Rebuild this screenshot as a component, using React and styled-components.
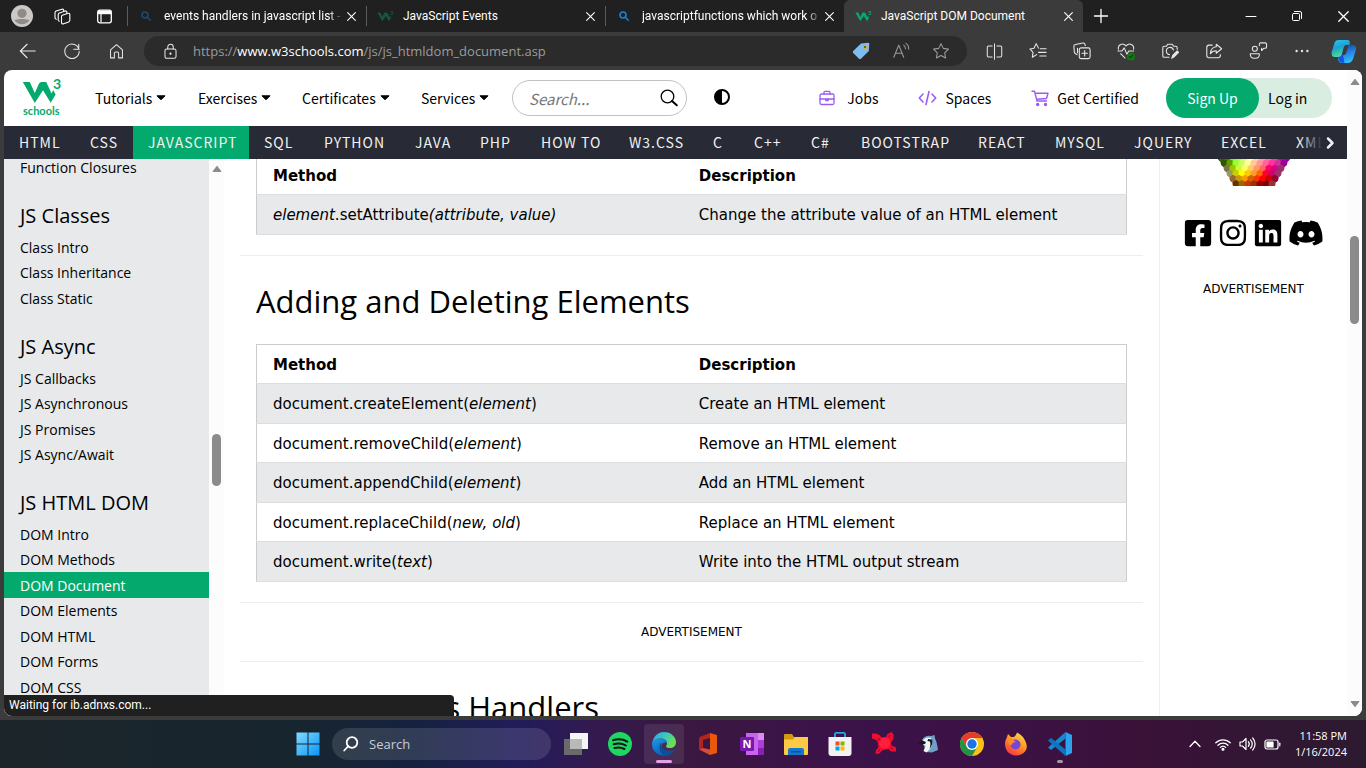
import React from "react";
import styled, { createGlobalStyle, css } from "styled-components";
import { FaFacebookSquare, FaInstagram, FaLinkedin, FaDiscord } from "react-icons/fa";

const green = "#04aa6d";
const segoe = '"Segoe UI", "Open Sans", "Noto Sans", sans-serif';
const chromeFont = '"Segoe UI", Roboto, "Open Sans", sans-serif';
const source = '"Source Sans Pro", "Noto Sans CJK SC", sans-serif';
const verdana = 'Verdana, "DejaVu Sans", sans-serif';

const GlobalStyle = createGlobalStyle`
  *, *::before, *::after { box-sizing: border-box; }
  body { margin: 0; background: #3b3b3b; font-family: ${segoe}; overflow: hidden; }
  button, input { font: inherit; color: inherit; border: 0; background: none; padding: 0; margin: 0; }
  button { cursor: pointer; }
  a { color: inherit; text-decoration: none; }
  svg { display: block; flex: none; overflow: visible; }
  ul { list-style: none; margin: 0; padding: 0; }
`;

const Desktop = styled.div`
  display: flex;
  flex-direction: column;
  height: 100vh;
  background: #3b3b3b;
`;

/* ---------- browser chrome ---------- */

const TabStrip = styled.header`
  display: flex;
  height: 32px;
  flex: none;
  background: #202020;
  color: #fff;
  font-family: ${chromeFont};
  font-size: 12px;
`;

const StripTools = styled.div`
  display: flex;
  width: 127px;
  padding-left: 2px;
`;

const StripButton = styled.button`
  display: flex;
  align-items: center;
  justify-content: center;
  width: ${(p) => p.$w || 40}px;
  height: 32px;
`;

const Tab = styled.div`
  display: flex;
  align-items: center;
  flex: 0 1 239px;
  min-width: 0;
  height: 32px;
  padding: 0 7px 0 10px;
  ${(p) =>
    p.$active
      ? css`
          background: #3b3b3b;
          border-radius: 6px 6px 0 0;
        `
      : css`
          position: relative;
          &::before {
            content: "";
            position: absolute;
            left: 0;
            top: 6px;
            height: 20px;
            border-left: 1px solid #5c5c5c;
          }
        `}
`;

const TabIcon = styled.span`
  display: flex;
  justify-content: center;
  flex: none;
  width: 18px;
  margin-right: 9px;
`;

const TabTitle = styled.span`
  flex: 1;
  min-width: 0;
  overflow: hidden;
  white-space: nowrap;
  ${(p) =>
    p.$fade &&
    css`
      mask-image: linear-gradient(90deg, #000 92%, transparent);
    `}
`;

const TabClose = styled.button`
  display: flex;
  align-items: center;
  justify-content: center;
  width: 16px;
  height: 16px;
`;

const WindowControls = styled.div`
  display: flex;
  margin-left: auto;
`;

const Toolbar = styled.nav`
  display: flex;
  align-items: center;
  height: 38px;
  flex: none;
  padding: 0 2px 0 6px;
  background: #3b3b3b;
  color: #e8e8e8;
`;

const ToolButton = styled.button`
  display: flex;
  align-items: center;
  justify-content: center;
  width: ${(p) => p.$w || 44}px;
  height: 30px;
  color: ${(p) => (p.$dim ? "#9b9b9b" : "#e8e8e8")};
`;

const AddressBar = styled.div`
  display: flex;
  align-items: center;
  flex: 1;
  min-width: 0;
  height: 30px;
  margin: 0 5px 0 6px;
  padding: 0 6px;
  border-radius: 15px;
  background: #2b2b2b;
`;

const Address = styled.div`
  flex: 1;
  min-width: 0;
  overflow: hidden;
  white-space: nowrap;
  padding-left: 3px;
  color: #9b9b9b;
  font-size: 13px;
  b {
    font-weight: 400;
    color: #fff;
  }
`;

/* ---------- page ---------- */

const Viewport = styled.div`
  position: relative;
  display: flex;
  flex: 1;
  min-height: 0;
  margin: 0 4px 4px;
  border-radius: 8px;
  overflow: hidden;
  background: #fff;
  color: #000;
`;

const Page = styled.div`
  display: flex;
  flex-direction: column;
  flex: 1;
  min-width: 0;
`;

const SiteHeader = styled.header`
  display: flex;
  align-items: center;
  flex: none;
  height: 56px;
  padding: 0 15px 0 18px;
  font-family: ${source};
  font-size: 14px;
`;

const LogoLink = styled.a`
  display: block;
  margin-right: 33px;
`;

const MenuButton = styled.button`
  display: flex;
  align-items: center;
  gap: 4px;
  width: ${(p) => p.$w}px;
  height: 56px;
  white-space: nowrap;
`;

const SearchForm = styled.form`
  display: flex;
  align-items: center;
  width: 175px;
  height: 36px;
  padding: 0 8px 0 16px;
  border: 1px solid #c1c1c1;
  border-radius: 18px;
  input {
    flex: 1;
    min-width: 0;
    outline: 0;
    font-size: 15px;
  }
  input::placeholder {
    color: #777;
    font-style: italic;
    opacity: 1;
  }
`;

const ThemeButton = styled.button`
  margin-left: 26px;
`;

const HeaderLinks = styled.div`
  display: flex;
  align-items: center;
  gap: 40px;
  margin-left: auto;
  white-space: nowrap;
`;

const HeaderLink = styled.a`
  display: flex;
  align-items: center;
  gap: ${(p) => p.$gap || 8}px;
`;

const Account = styled.div`
  display: flex;
  width: 166px;
  height: 40px;
  margin-left: 27px;
  border-radius: 20px;
  background: #d9eee1;
`;

const SignUp = styled.a`
  display: flex;
  align-items: center;
  justify-content: center;
  width: 93px;
  border-radius: 20px;
  background: ${green};
  color: #fff;
`;

const LogIn = styled.a`
  display: flex;
  align-items: center;
  padding-left: 9px;
`;

const TopicBar = styled.nav`
  position: relative;
  display: flex;
  flex: none;
  height: 33px;
  overflow: hidden;
  background: #282a35;
  color: #f1f1f1;
  font-family: ${source};
  font-size: 14px;
  letter-spacing: 1px;
`;

const Topic = styled.a`
  display: flex;
  align-items: center;
  flex: none;
  width: ${(p) => p.$w}px;
  padding: 0 0 2px 15px;
  background: ${(p) => (p.$active ? green : "transparent")};
  white-space: nowrap;
`;

const TopicNext = styled.button`
  position: absolute;
  right: 0;
  top: 0;
  display: flex;
  align-items: center;
  justify-content: flex-end;
  width: 48px;
  height: 33px;
  padding-right: 12px;
  background: linear-gradient(90deg, rgba(40, 42, 53, 0), #282a35 50%);
`;

const Columns = styled.div`
  display: flex;
  flex: 1;
  min-height: 0;
  overflow: hidden;
`;

const Sidebar = styled.aside`
  flex: 0 0 205px;
  overflow: hidden;
  background: #e7e9eb;
  font-size: 14px;
`;

const SidebarInner = styled.div`
  margin-top: -5px;
`;

const SidebarHeading = styled.h2`
  height: 54px;
  margin: 0;
  padding: 21px 0 0 16px;
  font-size: 20px;
  line-height: 30px;
  font-weight: 400;
`;

const SidebarLink = styled.a`
  display: flex;
  align-items: center;
  height: 25px;
  padding-left: 16px;
  background: ${(p) => (p.$active ? green : "transparent")};
  color: ${(p) => (p.$active ? "#fff" : "#000")};
  li:nth-child(odd) > & {
    height: 26px;
  }
`;

const ScrollTrack = styled.div`
  display: flex;
  flex-direction: column;
  align-items: center;
  flex: none;
  width: 15px;
  padding: ${(p) => p.$pad || "6px 0"};
  background: #fcfcfc;
`;

const ScrollThumb = styled.div`
  width: 9px;
  height: ${(p) => p.$h}px;
  margin: ${(p) => p.$top}px 0 auto;
  border-radius: 5px;
  background: #8b8b8b;
`;

const Main = styled.main`
  flex: 1;
  min-width: 0;
  overflow: hidden;
  padding: 0 16px;
  font-family: ${verdana};
  font-size: 15px;
`;

const MainInner = styled.div`
  margin-top: -4px;
`;

const MethodTable = styled.table`
  width: calc(100% - 32px);
  margin: 0 16px;
  table-layout: fixed;
  border-collapse: collapse;
  border: 1px solid #ccc;
  th,
  td {
    height: 39px;
    padding: 2px 16px 0;
    border-bottom: 1px solid #ddd;
    text-align: left;
    line-height: 22px;
  }
  th:first-child {
    width: 49%;
  }
  tbody tr:nth-child(odd) td {
    height: 40px;
    padding-top: 0;
    background: #e7e9eb;
  }
`;

const Rule = styled.hr`
  height: 1px;
  margin: 20px 0;
  border: 0;
  background: #eee;
`;

const SectionTitle = styled.h2`
  margin: 0 16px 18px;
  font-family: ${segoe};
  font-size: 31px;
  line-height: 50px;
  font-weight: 400;
`;

const AdLabel = styled.p`
  margin: 0;
  text-align: center;
  font-family: ${verdana};
  font-size: 12px;
  line-height: 18px;
`;

const RightColumn = styled.aside`
  display: flex;
  flex-direction: column;
  align-items: center;
  flex: 0 0 188px;
  border-left: 1px solid #eee;
`;

const Socials = styled.div`
  display: flex;
  align-items: center;
  gap: 5px;
  margin: 29px 0;
`;

const StatusBubble = styled.div`
  position: absolute;
  left: 0;
  bottom: 0;
  width: 450px;
  height: 21px;
  padding-left: 5px;
  border-radius: 0 4px 0 0;
  background: #202020;
  color: #fff;
  font-family: ${chromeFont};
  font-size: 12px;
  line-height: 21px;
`;

/* ---------- taskbar ---------- */

const Taskbar = styled.footer`
  display: grid;
  grid-template-columns: 1fr auto 1fr;
  align-items: center;
  height: 48px;
  flex: none;
  color: #fff;
  background: linear-gradient(
    90deg,
    #1c252a 0%,
    #17252f 22%,
    #15223f 30%,
    #211c5b 38%,
    #321a50 43%,
    #3a1840 50%,
    #3b1349 60%,
    #3c1145 74%,
    #3a1138 83%,
    #2c1a30 100%
  );
`;

const TaskGroup = styled.div`
  grid-column: 2;
  display: flex;
  align-items: center;
  padding-left: 4px;
`;

const StartButton = styled.button`
  display: flex;
  justify-content: center;
  width: 40px;
`;

const TaskSearch = styled.label`
  display: flex;
  align-items: center;
  gap: 10px;
  width: 219px;
  height: 32px;
  margin: 0 3px 0 4px;
  padding: 0 12px 0 11px;
  border-radius: 16px;
  background: rgba(255, 255, 255, 0.12);
  font-size: 13px;
  input {
    flex: 1;
    min-width: 0;
    outline: 0;
  }
  input::placeholder {
    color: #c8cdd6;
    opacity: 1;
  }
`;

const TaskButton = styled.button`
  position: relative;
  display: flex;
  align-items: center;
  justify-content: center;
  width: 40px;
  height: 40px;
  margin: 0 2px;
  border-radius: 4px;
  background: ${(p) => (p.$active ? "rgba(255,255,255,0.09)" : "none")};
  ${(p) =>
    p.$mark &&
    css`
      &::after {
        content: "";
        position: absolute;
        bottom: 1px;
        width: ${p.$active ? 16 : 6}px;
        height: 3px;
        border-radius: 2px;
        background: ${p.$mark};
      }
    `}
`;

const Tray = styled.div`
  display: flex;
  align-items: center;
  justify-content: flex-end;
  gap: 8px;
  padding-right: 19px;
`;

const Clock = styled.time`
  margin-left: 6px;
  text-align: right;
  font-size: 11px;
  line-height: 16px;
  white-space: nowrap;
`;

/* ---------- drawings ---------- */

const Line = ({ w = 18, h = w, box = "0 0 20 20", sw = 1.2, children, ...rest }) => (
  <svg width={w} height={h} viewBox={box} fill="none" stroke="currentColor" strokeWidth={sw} strokeLinecap="round" strokeLinejoin="round" aria-hidden="true" {...rest}>
    {children}
  </svg>
);

const CrossIcon = ({ size = 9 }) => (
  <Line w={size} box="0 0 10 10" sw={1.2}>
    <path d="M.7.7l8.6 8.6M9.3.7L.7 9.3" />
  </Line>
);

const AvatarIcon = () => (
  <svg width="22" height="22" viewBox="0 0 22 22" aria-hidden="true">
    <circle cx="11" cy="11" r="11" fill="#cbc8c6" />
    <circle cx="11" cy="8.3" r="4.6" fill="#8f8b88" />
    <path d="M3.5 15.5c2-2 13-2 15 0a9.5 9.5 0 0 1-15 0z" fill="#8f8b88" />
  </svg>
);

const WorkspacesIcon = () => (
  <Line w={17} box="0 0 17 17" sw={1.1}>
    <path d="M8.200 7.300L14.200 5.300Q15.800 5 15.800 6.600V12.300Q15.800 13.500 14.700 13.900L9.700 15.700Q7.500 16.300 7.500 14.500V8.500Q7.500 7.600 8.200 7.300z" />
    <path d="M5.300 13.300Q4.200 13 4.200 11.800V6.800Q4.200 5.400 5.400 5L11.300 3.100M12.800 5.300V4Q12.800 2.900 11.500 3.100M2.300 11.300Q1 11 1 9.800V4.700Q1 3.500 2.200 3.100L8 1.200Q9.500.8 9.700 2.200V3.500" />
  </Line>
);

const TabActionsIcon = () => (
  <svg width="15" height="15" viewBox="0 0 15 15" fill="none" aria-hidden="true">
    <rect x=".7" y="1.2" width="13.6" height="12.6" rx="2" stroke="#fff" strokeWidth="1.3" />
    <path d="M1 1.5h13v3.700H1z" fill="#fff" />
    <path d="M4 5v8.500" stroke="#fff" strokeWidth="1.2" />
  </svg>
);

const TabSearchIcon = ({ color }) => (
  <Line w={10} box="0 0 10 10" sw={1.6} style={{ color }}>
    <circle cx="4" cy="4" r="3" />
    <path d="M6.300 6.300L9.200 9.200" />
  </Line>
);

const markPath = "M.8 4H7.800L12.800 15L16.800 6Q17.700 4 19.500 4H24.200L29.600 15.500L31.200 12L33.600 16.500L28.700 24.800L21 12.200L12.800 25Z";

const TabMark = ({ color }) => (
  <svg width="17" height="14" viewBox="0 0 17 14" aria-hidden="true" fill={color}>
    <path d={markPath} transform="translate(0 1.800) scale(.42)" />
    <text x="13" y="6" fontSize="6" fontWeight="700" fontFamily="Lato, sans-serif">3</text>
  </svg>
);

const W3Logo = () => (
  <svg width="40" height="40" viewBox="0 0 40 40" fill={green} role="img" aria-label="W3Schools">
    <path d={markPath} />
    <text x="31" y="11" fontSize="14" fontWeight="700" fontFamily="Lato, sans-serif">3</text>
    <text x="1" y="37" fontSize="11" fontWeight="700" fontFamily="Lato, sans-serif">schools</text>
  </svg>
);

const Caret = () => (
  <svg width="10" height="6" viewBox="0 0 10 6" aria-hidden="true">
    <path d="M1 .8h8L5 4.800z" fill="#000" stroke="#000" strokeLinejoin="round" />
  </svg>
);

const ScrollArrow = ({ down }) => (
  <svg width="10" height="8" viewBox="0 0 10 8" aria-hidden="true">
    <path d={down ? "M1 1.500h8L5 6.800z" : "M1 6.500h8L5 1.200z"} fill="#8b8b8b" stroke="#8b8b8b" strokeLinejoin="round" />
  </svg>
);

const hexRows = [
  ["#336600", "#009900", "#66ff33", "#99ff66", "#ccff99", "#ffffcc", "#ffcccc", "#ff99cc", "#ff66cc", "#ff33cc", "#cc0099", "#9900aa"],
  ["#335500", "#669900", "#99ff33", "#ccff66", "#ffff99", "#ffcc99", "#ff9999", "#ff6699", "#ff3399", "#cc3399", "#990099"],
  ["#777744", "#99cc00", "#ccff33", "#ffff66", "#ffcc66", "#ff9966", "#ff6666", "#ff0066", "#d60094", "#993366"],
  ["#999966", "#cccc00", "#ffff00", "#ffcc00", "#ff9933", "#ff6600", "#ff0033", "#cc0066", "#a0306a"],
  ["#996633", "#cc9900", "#ff9900", "#cc6600", "#ff3300", "#ff0000", "#cc0000", "#990033"],
  ["#663300", "#996600", "#cc3300", "#993300", "#990000", "#800000", "#993333"],
];

const ColorPicker = () => (
  <svg width="72" height="27" viewBox="0 0 72 27" role="img" aria-label="Color picker">
    <defs>
      <clipPath id="pickerEdge"><path d="M0 0H72L57 27H15z" /></clipPath>
    </defs>
    <g clipPath="url(#pickerEdge)">
      {hexRows.map((row, r) =>
        row.map((color, i) => {
          const x = 36 + (i - (row.length - 1) / 2) * 6;
          const y = -1 + r * 5.2;
          return <path key={`${r}-${i}`} fill={color} stroke={color} d={`M${x} ${y - 3.5}l3 1.750v3.500l-3 1.750l-3 -1.750v-3.500z`} />;
        })
      )}
    </g>
  </svg>
);

const toolIcons = {
  Back: <Line><path d="M18 10H2M9 2.500L1.500 10L9 17.500" /></Line>,
  Refresh: <Line><path d="M17.800 8.500A8 8 0 1 0 18 10.500M17.500 2.500v5.500h-5.500" /></Line>,
  Home: <Line w={17}><path d="M3 8.200L10 2l7 6.200v9.300h-4.500v-5.300c0-1-.7-1.700-1.600-1.700H9.100c-.9 0-1.600.7-1.600 1.700v5.300H3z" /></Line>,
  Lock: <Line w={17}><rect x="3.500" y="7" width="13" height="11" rx="2" /><path d="M6.800 7V4.700a3.200 3.200 0 0 1 6.400 0V7" /><circle cx="10" cy="12.500" r=".7" fill="currentColor" /></Line>,
  Split: <Line w={17}><path d="M10 1v18M7.200 3.500H3a1.500 1.500 0 0 0-1.500 1.500v10A1.500 1.500 0 0 0 3 16.500h4.200M12.800 3.500H17a1.500 1.500 0 0 1 1.500 1.500v10a1.500 1.500 0 0 1-1.500 1.500h-4.200" /></Line>,
  Favorites: <Line><path d="M10.500 6.800L8 1.800L5.500 7L1 7.700l3.500 3.800l-.8 5.500L8.500 14M12.500 7.500H19M10.500 11.500H19M12 15.500h7" /></Line>,
  Collections: <Line><rect x="7" y="6.500" width="12" height="12" rx="2" /><path d="M13 9.500v6M10 12.500h6M4.500 14L2.500 12.800a2 2 0 0 1-1-1.500L1 5a2 2 0 0 1 1.700-2.200L11 1.200a2 2 0 0 1 2.300 1.500l.3 1.300M5 12V7" /></Line>,
  Essentials: (
    <Line>
      <path d="M1.500 8C.8 2.500 6.500.5 10 4.300C13.500.5 19.200 2.500 18.500 8M1 10h4.500L8 6.500l3 7l2-3.500h5.500M4 13l5 4.800" />
      <circle cx="15.500" cy="16" r="4.400" fill="#107c10" stroke="none" />
      <path d="M13.500 16l1.500 1.500l2.500-3" stroke="#063f06" />
    </Line>
  ),
  Screenshot: <Line><path d="M9 17H3.500A1.500 1.500 0 0 1 2 15.500V6.300a1.500 1.500 0 0 1 1.500-1.500H6L7.500 2.500h5L14 4.800h2.500A1.500 1.500 0 0 1 18 6.300V8M9.500 14A4 4 0 1 1 13.800 9" /><path d="M12 18l1-3l5-5l1.500 1.500l-5 5z" fill="currentColor" /></Line>,
  Share: <Line><path d="M8 3.500H4.500A2.500 2.500 0 0 0 2 6v9a2.500 2.500 0 0 0 2.500 2.500h10A2.500 2.500 0 0 0 17 15v-1M12.500 2.500L18.500 7.500l-6 5V9.800c-3 0-5 .9-6.500 3.200c.3-4.500 2.500-7.300 6.500-7.700z" /></Line>,
  Profiles: <Line><circle cx="6.500" cy="7.500" r="2.800" /><path d="M1.500 13h10v1.500a4 4 0 0 1-4 3.500h-2a4 4 0 0 1-4-3.500zM11.500 4V2.500Q11.500 1 13 1h5Q19.500 1 19.500 2.500v3Q19.500 7 18 7h-1.500l-2.500 2.500V7" /></Line>,
  More: <svg width="18" height="18" viewBox="0 0 20 20" fill="currentColor" aria-hidden="true"><circle cx="4" cy="10" r="1.3" /><circle cx="10" cy="10" r="1.3" /><circle cx="16" cy="10" r="1.3" /></svg>,
};

const CopilotIcon = () => (
  <svg width="26" height="24" viewBox="0 0 26 24" aria-hidden="true">
    <defs>
      <linearGradient id="cpA" x1="0" y1="0" x2=".3" y2="1"><stop stopColor="#29c5f6" /><stop offset=".5" stopColor="#1ba0d0" /><stop offset="1" stopColor="#4fdc8c" /></linearGradient>
      <linearGradient id="cpB" x1=".2" y1="0" x2=".5" y2="1"><stop stopColor="#0b4a92" /><stop offset=".5" stopColor="#2a7fe8" /><stop offset="1" stopColor="#2bc5fb" /></linearGradient>
    </defs>
    <path d="M8.500 14L16 6h5.500c3.500 0 4 3 3.200 5.500l-2.500 8c-1 3-3 4.500-5.500 4.500H11c-2.500 0-4-2-4-4.500z" fill="url(#cpB)" />
    <path d="M7.500 1H16c2.500 0 3.500 1.500 2.500 5h-2.500c-2 0-2.800 1.500-3.300 3l-1.500 5.500C10.500 16.500 9 18 7 18H3.500C.5 18 .3 14.500 1 12l2.500-8C4.200 2 5.500 1 7.500 1z" fill="url(#cpA)" />
    <path d="M16 6c-2 0-2.800 1.500-3.300 3l-2 7c2 1 4-.5 4.500-2L17.500 6z" fill="#3b3b3b" />
    <path d="M7.500 18c2.500 0 3.500-2 4-4l2 9.500c-3.500 1-6-.5-6-5.500z" fill="#1a4fe0" />
  </svg>
);

const TagIcon = () => (
  <svg width="18" height="18" viewBox="0 0 18 18" aria-hidden="true">
    <path d="M9 1.500L16 .8q1.300 0 1.300 1.300L16.800 9L9 16.800q-1 .9-2 0L1.200 11q-.9-1 0-2z" fill="#7fbdee" />
    <circle cx="13" cy="5" r="2" fill="#e8b019" /><circle cx="13" cy="5" r=".9" fill="#4a3a10" />
  </svg>
);

const ReadAloudIcon = () => (
  <Line w={18}><path d="M2 17L7.500 3.500L13 17M4 12.500h7M13 3.500c1.500 1 2 2.500 2 4M15.500 1.500c2.300 1.500 3.200 4 3 6.500" /></Line>
);

const StarIcon = () => (
  <Line w={18}><path d="M10 1.800l2.500 5.300l5.800.8l-4.200 4.100l1 5.800L10 15l-5.100 2.800l1-5.800L1.700 7.900l5.800-.8z" /></Line>
);

/* taskbar drawings */

const WindowsIcon = () => (
  <svg width="24" height="24" viewBox="0 0 24 24" aria-hidden="true">
    <linearGradient id="win" x1="0" y1="0" x2="1" y2="1"><stop stopColor="#7fdcff" /><stop offset="1" stopColor="#0a94f5" /></linearGradient>
    <path d="M.5.5h11v11H.5zM12.500.5h11v11h-11zM.5 12.500h11v11H.5zM12.500 12.500h11v11h-11z" fill="url(#win)" />
  </svg>
);

const taskIcons = [
  ["Task View", <svg width="24" height="24" viewBox="0 0 24 24"><path d="M6 1h18v16H6z" fill="#f4f4f4" /><path d="M0 7h18v16H0z" fill="#6a6a6a" /><path d="M6 7h12v10H6z" fill="#b9b9b9" /></svg>],
  ["Spotify", <svg width="24" height="24" viewBox="0 0 24 24"><circle cx="12" cy="12" r="12" fill="#1ed760" /><path d="M5 8.300c5-1.500 10.300-1 14.300 1.300M5.700 12.300c4.300-1.200 8.700-.8 12.200 1.200M6.400 16c3.500-.9 7-.6 10 1" fill="none" stroke="#10141a" strokeWidth="2" strokeLinecap="round" /></svg>],
  ["Edge", (
    <svg width="24" height="24" viewBox="0 0 24 24">
      <defs>
        <linearGradient id="edA" x1="0" y1="0" x2="1" y2=".5"><stop stopColor="#2aa9e0" /><stop offset=".5" stopColor="#36c6c8" /><stop offset="1" stopColor="#6fe04a" /></linearGradient>
        <linearGradient id="edB" x1="0" y1="0" x2=".5" y2="1"><stop stopColor="#1e9be3" /><stop offset="1" stopColor="#0c5fc0" /></linearGradient>
      </defs>
      <path d="M.5 11C1 4.500 6 0 12 0c7 0 12 5 12 10c0 4-2.800 6-6 6c-2.500 0-4-.8-4-1.800c0-.7 1-1.200 1-3C15 8.500 12 6.500 8.500 6.500C4.500 6.500 1.500 8.500.5 11z" fill="url(#edA)" />
      <path d="M0 12c0-4 4-5.800 8-5.500c4 .2 7 2.500 7 4.700c-2.500-1.500-5.500 0-5.500 3.300c0 4 3.500 7 7 7.500C9 26 0 21 0 12z" fill="url(#edB)" />
      <path d="M9 10.500C6.500 13.500 6.500 21 13 24c5-.2 8.500-3.500 9.800-6.500c-4.500 2.500-13.500 1.500-13.300-4z" fill="#0d4f98" />
    </svg>
  )],
  ["Office", <svg width="20" height="24" viewBox="0 0 20 24"><path d="M12 1l7 2v18l-7 2z" fill="#e8590c" /><path d="M12 1L2.500 4.500Q1 5 1 7v10.500L5 16V8l7-2z" fill="#b5231d" /><path d="M1 17.500L5 16l7 1.500V23z" fill="#d84a35" /></svg>],
  ["OneNote", (
    <svg width="24" height="24" viewBox="0 0 24 24">
      <path d="M6 1h18v22H6z" fill="#c964ee" /><path d="M18 1h6v7h-6z" fill="#d98af4" /><path d="M18 8h6v8h-6z" fill="#ae3ddb" /><path d="M18 16h6v7h-6z" fill="#8b1fb5" />
      <rect y="5" width="14" height="14" rx="1" fill="#7719aa" />
      <text x="7" y="16" textAnchor="middle" fontSize="11" fontWeight="700" fontFamily="Open Sans, sans-serif" fill="#fff">N</text>
    </svg>
  )],
  ["File Explorer", <svg width="24" height="24" viewBox="0 0 24 24"><path d="M0 3q0-1 1-1h7l2 3h14v6H0z" fill="#d19a10" /><path d="M0 7.500h9L11 5h12q1 0 1 1v16q0 1-1 1H1q-1 0-1-1z" fill="#fdca45" /><path d="M4 23v-5q0-2 2-2h12q2 0 2 2v5z" fill="#1477cf" /><path d="M7 19h10v1.500H7z" fill="#0b559c" /></svg>],
  ["Microsoft Store", <svg width="24" height="24" viewBox="0 0 24 24"><path d="M7 6V2q0-1.200 1.200-1.200h7.600Q17 .8 17 2v4" fill="none" stroke="#27a7e6" strokeWidth="1.8" /><path d="M.5 5h23v16q0 3-3 3h-17q-3 0-3-3z" fill="#f2f2f2" /><path d="M7.500 9.500h4v4h-4z" fill="#f25022" /><path d="M12.500 9.500h4v4h-4z" fill="#7fba00" /><path d="M7.500 14.500h4v4h-4z" fill="#00a4ef" /><path d="M12.500 14.500h4v4h-4z" fill="#ffb900" /></svg>],
  ["Red Star", <svg width="24" height="24" viewBox="0 0 24 24"><path d="M0 1.500H4L7.500 3L9.500 5.500L14 5L15.500 2L19.500 0L21.500 2.500V7L19 10.500L19.500 13.500L24 15.500V19.500H19L17 17L13.500 17.500L10 18.500L7.500 21.500L3.500 22L4 18L6.500 15.500L6 11.500L5 8.500L0 6.500z" fill="#f20d2e" /><circle cx="12.500" cy="11" r="5.500" fill="#ff1f3c" /><path d="M6 6.500l2.500 2M17 5l1-2M18.500 15.500l2.500 1.500M8 17l-2 2.500" stroke="#a8061f" strokeWidth="1.2" /></svg>],
  ["Bluebird", <svg width="20" height="18" viewBox="0 0 20 18"><path d="M4 5Q7 0 13 1L16.500 0L17 3.500Q19 7 20 15L14 17.500L8 17Z" fill="#6d9fc9" /><path d="M5 5Q9 1.500 13 3Q15.500 7 13 13L8.500 17.500L5.500 16L7.500 11L5 9.500Z" fill="#f1f4f6" /><path d="M0 8.500L4.500 5.500L8 7L7 9L3.500 9.500ZM10 4L14 4.500Q15.500 9 11.500 14Q13 9 12 6.500L9.500 6Z" fill="#14181d" /></svg>],
  ["Chrome", <svg width="24" height="24" viewBox="0 0 24 24"><circle cx="12" cy="12" r="12" fill="#fbc116" /><path d="M1.600 6A12 12 0 0 1 22.400 6H12L6.800 15z" fill="#e33b2e" /><path d="M1.600 6A12 12 0 0 0 12 24l5.200-9H6.800z" fill="#229342" /><circle cx="12" cy="12" r="6" fill="#fff" /><circle cx="12" cy="12" r="4.7" fill="#1a73e8" /></svg>],
  ["Firefox", (
    <svg width="24" height="24" viewBox="0 0 24 24">
      <linearGradient id="ff" x1=".8" y1="0" x2=".2" y2="1"><stop stopColor="#ffe24a" /><stop offset=".5" stopColor="#ff8a1f" /><stop offset="1" stopColor="#f5304f" /></linearGradient>
      <path d="M3 5l1-3l3 3h3q2-1 3-4.500q6 3 8 8Q26 18 17 22.500Q8 25.500 3 19Q-1 12 3 5z" fill="url(#ff)" /><circle cx="11.500" cy="12.500" r="5" fill="#7546d8" /><path d="M3 8q5-2 9 2q-4 0-4 3q-3 0-5-5z" fill="#ff8a1f" />
    </svg>
  )],
  ["Visual Studio Code", <svg width="24" height="24" viewBox="0 0 24 24"><path d="M17.500 0L24 3v18l-6.500 3z" fill="#2ba3ef" /><path d="M17.500 0v6.500L3 18l-3-2.500z" fill="#1787d0" /><path d="M17.500 24v-6.500L3 6L0 8.500z" fill="#0d74c0" /></svg>],
];

const topics = [
  ["HTML", 71], ["CSS", 58], ["JAVASCRIPT", 116], ["SQL", 60], ["PYTHON", 91], ["JAVA", 65], ["PHP", 61],
  ["HOW TO", 88], ["W3.CSS", 84], ["C", 41], ["C++", 57], ["C#", 50], ["BOOTSTRAP", 117], ["REACT", 77],
  ["MYSQL", 79], ["JQUERY", 87], ["EXCEL", 75], ["XML", 66],
];

const sections = [
  { links: ["Function Closures"] },
  { title: "JS Classes", links: ["Class Intro", "Class Inheritance", "Class Static"] },
  { title: "JS Async", links: ["JS Callbacks", "JS Asynchronous", "JS Promises", "JS Async/Await"] },
  { title: "JS HTML DOM", links: ["DOM Intro", "DOM Methods", "DOM Document", "DOM Elements", "DOM HTML", "DOM Forms", "DOM CSS"] },
];

const tabs = [
  { icon: <TabSearchIcon color="#1b4a75" />, title: "events handlers in javascript list -", fade: true },
  { icon: <TabMark color="#17563f" />, title: "JavaScript Events" },
  { icon: <TabSearchIcon color="#1f7fd6" />, title: "javascriptfunctions which work o", fade: true },
  { icon: <TabMark color={green} />, title: "JavaScript DOM Document", active: true },
];

const Methods = ({ rows }) => (
  <MethodTable>
    <thead>
      <tr><th scope="col">Method</th><th scope="col">Description</th></tr>
    </thead>
    <tbody>
      {rows.map(([method, text]) => (
        <tr key={text}><td>{method}</td><td>{text}</td></tr>
      ))}
    </tbody>
  </MethodTable>
);

export default function App() {
  return (
    <Desktop>
      <GlobalStyle />
      <TabStrip>
        <StripTools>
          <StripButton aria-label="Profile"><AvatarIcon /></StripButton>
          <StripButton aria-label="Workspaces"><WorkspacesIcon /></StripButton>
          <StripButton $w={44} aria-label="Tab actions"><TabActionsIcon /></StripButton>
        </StripTools>
        {tabs.map((t) => (
          <Tab key={t.title} $active={t.active}>
            <TabIcon>{t.icon}</TabIcon>
            <TabTitle $fade={t.fade}>{t.title}</TabTitle>
            <TabClose aria-label="Close tab"><CrossIcon /></TabClose>
          </Tab>
        ))}
        <StripButton $w={36} aria-label="New tab"><Line w={14} box="0 0 14 14" sw={1.3}><path d="M7 .5v13M.5 7h13" /></Line></StripButton>
        <WindowControls>
          <StripButton $w={46} aria-label="Minimize"><Line w={10} box="0 0 10 10" sw={1}><path d="M0 5.500h10" /></Line></StripButton>
          <StripButton $w={46} aria-label="Restore"><Line w={10} box="0 0 10 10" sw={1}><rect x=".5" y="2.500" width="7" height="7" rx="1" /><path d="M2.500.5H8A1.500 1.500 0 0 1 9.500 2v5.500" /></Line></StripButton>
          <StripButton $w={46} aria-label="Close window"><CrossIcon size={11} /></StripButton>
        </WindowControls>
      </TabStrip>

      <Toolbar aria-label="Browser toolbar">
        {["Back", "Refresh", "Home"].map((n) => <ToolButton key={n} aria-label={n}>{toolIcons[n]}</ToolButton>)}
        <AddressBar>
          <ToolButton $w={40} aria-label="Site information">{toolIcons.Lock}</ToolButton>
          <Address>https://<b>www.w3schools.com</b>/js/js_htmldom_document.asp</Address>
          <ToolButton $w={40} aria-label="Shopping"><TagIcon /></ToolButton>
          <ToolButton $w={40} $dim aria-label="Read aloud"><ReadAloudIcon /></ToolButton>
          <ToolButton $w={40} $dim aria-label="Add to favorites"><StarIcon /></ToolButton>
        </AddressBar>
        {["Split", "Favorites", "Collections", "Essentials", "Screenshot", "Share", "Profiles", "More"].map((n) => (
          <ToolButton key={n} aria-label={n}>{toolIcons[n]}</ToolButton>
        ))}
        <ToolButton $w={40} aria-label="Copilot"><CopilotIcon /></ToolButton>
      </Toolbar>

      <Viewport>
        <Page>
          <SiteHeader>
            <LogoLink href="#home"><W3Logo /></LogoLink>
            <MenuButton $w={103}>Tutorials<Caret /></MenuButton>
            <MenuButton $w={104}>Exercises<Caret /></MenuButton>
            <MenuButton $w={119}>Certificates<Caret /></MenuButton>
            <MenuButton $w={91}>Services<Caret /></MenuButton>
            <SearchForm onSubmit={(e) => e.preventDefault()}>
              <input type="text" placeholder="Search..." aria-label="Search tutorials" />
              <button type="submit" aria-label="Search">
                <Line w={18} box="0 0 18 18" sw={1.3}><circle cx="7.500" cy="7.500" r="6.3" /><path d="M12 12l4.800 4.300" strokeWidth="2" /></Line>
              </button>
            </SearchForm>
            <ThemeButton aria-label="Toggle dark mode">
              <svg width="18" height="18" viewBox="0 0 18 18" aria-hidden="true"><circle cx="9" cy="8" r="7" fill="none" stroke="#000" strokeWidth="2" /><path d="M9 1a7 7 0 0 0 0 14z" /></svg>
            </ThemeButton>
            <HeaderLinks>
              <HeaderLink href="#jobs" $gap={12}>
                <Line w={16} box="0 0 16 16" sw={1.3} style={{ color: "#9a5cf5" }}><rect x="1" y="4" width="14" height="10.500" rx="1.500" /><path d="M5 4V2.500Q5 1.300 6 1.300h4q1 0 1 1.200V4M1 9h14M6.800 9v1.500h2.400V9" /></Line>
                Jobs
              </HeaderLink>
              <HeaderLink href="#spaces">
                <Line w={19} h={16} box="0 0 19 16" sw={1.6} style={{ color: "#9a5cf5" }}><path d="M5 4L1.300 8L5 12M14 4l3.700 4L14 12M11 1.500L8 14.500" /></Line>
                Spaces
              </HeaderLink>
              <HeaderLink href="#certified">
                <Line w={18} h={17} box="0 0 18 17" sw={1.4} style={{ color: "#9a5cf5" }}><path d="M1 1.200h2.500L6 11h9.500M4.200 3.300H17L15.500 8.500L5.500 9.200" /><circle cx="6.700" cy="14.500" r="1" fill="currentColor" /><circle cx="14.500" cy="14.500" r="1" fill="currentColor" /></Line>
                Get Certified
              </HeaderLink>
            </HeaderLinks>
            <Account>
              <SignUp href="#signup">Sign Up</SignUp>
              <LogIn href="#login">Log in</LogIn>
            </Account>
          </SiteHeader>

          <TopicBar aria-label="Topics">
            {topics.map(([name, w]) => (
              <Topic key={name} href={`#${name}`} $w={w} $active={name === "JAVASCRIPT"}>{name}</Topic>
            ))}
            <TopicNext aria-label="More topics">
              <Line w={9} h={12} box="0 0 9 12" sw={2.5}><path d="M2 1.500L6.500 6L2 10.500" /></Line>
            </TopicNext>
          </TopicBar>

          <Columns>
            <Sidebar>
              <SidebarInner>
                {sections.map((s) => (
                  <section key={s.links[0]}>
                    {s.title && <SidebarHeading>{s.title}</SidebarHeading>}
                    <ul>
                      {s.links.map((l) => (
                        <li key={l}><SidebarLink href={`#${l}`} $active={l === "DOM Document"}>{l}</SidebarLink></li>
                      ))}
                    </ul>
                  </section>
                ))}
              </SidebarInner>
            </Sidebar>
            <ScrollTrack>
              <ScrollArrow />
              <ScrollThumb $top={261} $h={52} />
            </ScrollTrack>
            <Main>
              <MainInner>
                <Methods rows={[[<><i>element</i>.setAttribute<i>(attribute, value)</i></>, "Change the attribute value of an HTML element"]]} />
                <Rule />
                <SectionTitle>Adding and Deleting Elements</SectionTitle>
                <Methods
                  rows={[
                    [<>document.createElement(<i>element</i>)</>, "Create an HTML element"],
                    [<>document.removeChild(<i>element</i>)</>, "Remove an HTML element"],
                    [<>document.appendChild(<i>element</i>)</>, "Add an HTML element"],
                    [<>document.replaceChild(<i>new, old</i>)</>, "Replace an HTML element"],
                    [<>document.write(<i>text</i>)</>, "Write into the HTML output stream"],
                  ]}
                />
                <Rule />
                <AdLabel>ADVERTISEMENT</AdLabel>
                <Rule />
                <SectionTitle>Adding Events Handlers</SectionTitle>
              </MainInner>
            </Main>
            <RightColumn>
              <ColorPicker />
              <Socials>
                <a href="#facebook" aria-label="Facebook"><FaFacebookSquare size={30} /></a>
                <a href="#instagram" aria-label="Instagram"><FaInstagram size={30} /></a>
                <a href="#linkedin" aria-label="LinkedIn"><FaLinkedin size={30} /></a>
                <a href="#discord" aria-label="Discord"><FaDiscord size={36} /></a>
              </Socials>
              <AdLabel>ADVERTISEMENT</AdLabel>
            </RightColumn>
          </Columns>
        </Page>
        <ScrollTrack $pad="8px 0">
          <ScrollArrow />
          <ScrollThumb $top={150} $h={88} />
          <ScrollArrow down />
        </ScrollTrack>
        <StatusBubble role="status">Waiting for ib.adnxs.com...</StatusBubble>
      </Viewport>

      <Taskbar>
        <TaskGroup>
          <StartButton aria-label="Start"><WindowsIcon /></StartButton>
          <TaskSearch>
            <Line w={16} box="0 0 16 16" sw={1.8}><circle cx="9" cy="6.500" r="5.3" /><path d="M5 10.500L1.200 14.500" /></Line>
            <input type="text" placeholder="Search" aria-label="Search" />
          </TaskSearch>
          {taskIcons.map(([name, icon]) => (
            <TaskButton key={name} aria-label={name} $active={name === "Edge"} $mark={name === "Edge" ? "#e3a0e8" : name === "Visual Studio Code" ? "#a597a8" : null}>
              {icon}
            </TaskButton>
          ))}
        </TaskGroup>
        <Tray>
          <Line w={12} h={8} box="0 0 12 8" sw={1.3}><path d="M1 6.500L6 1.200l5 5.300" /></Line>
          <Line w={16} h={13} box="0 0 16 13" sw={1.3} style={{ marginLeft: 6 }}><path d="M.8 4.800a10.300 10.300 0 0 1 14.400 0M3 7.200a7 7 0 0 1 10 0M5.300 9.400a3.900 3.900 0 0 1 5.400 0" /><circle cx="8" cy="11.300" r=".9" fill="currentColor" /></Line>
          <Line w={17} h={14} box="0 0 17 14" sw={1.2}><path d="M1 5h2.500L7 1.500v11L3.500 9H1zM9.300 4.700a3.500 3.500 0 0 1 0 4.600M11.500 2.800a6 6 0 0 1 0 8.400M13.700 1a8.800 8.800 0 0 1 0 12" /></Line>
          <Line w={17} h={11} box="0 0 17 11" sw={1.2}><rect x="1" y="1" width="13" height="9" rx="2" /><path d="M3 3h6v5H3z" fill="currentColor" /><path d="M15.800 4.200v2.600" /></Line>
          <Clock>11:58 PM<br />1/16/2024</Clock>
        </Tray>
      </Taskbar>
    </Desktop>
  );
}
